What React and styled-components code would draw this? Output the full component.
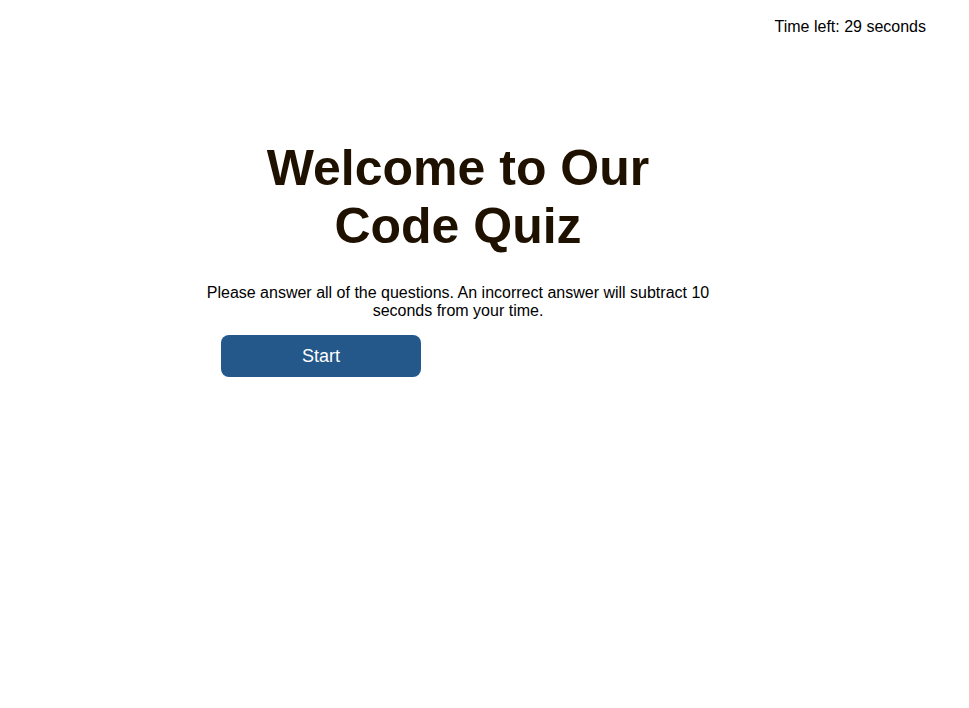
import React from 'react';
import styled, {createGlobalStyle} from 'styled-components';

const Global = createGlobalStyle`
  body {
    margin: 0;
    background: #ffffff;
    font-family: "Liberation Sans", Arial, Helvetica, sans-serif;
    color: #000000;
  }
`;

const Page = styled.div`
  width: 969px;
  min-height: 708px;
`;

const Header = styled.header`
  display: flex;
  justify-content: flex-end;
  padding: 18px 43px 0 0;
  font-size: 16px;
  line-height: 18px;
`;

const Main = styled.main`
  width: 510px;
  margin: 103px 0 0 203px;
  display: flex;
  flex-direction: column;
`;

const Title = styled.h1`
  margin: 0 0 29px;
  text-align: center;
  font-size: 50px;
  line-height: 58px;
  font-weight: 700;
  color: #1f1100;
`;

const Intro = styled.p`
  margin: 0 0 15px;
  text-align: center;
  font-size: 16px;
  line-height: 18px;
`;

const StartButton = styled.button`
  align-self: flex-start;
  margin-left: 18px;
  width: 200px;
  height: 42px;
  border: none;
  border-radius: 8px;
  background: #24578a;
  color: #ffffff;
  font-family: inherit;
  font-size: 18px;
  cursor: pointer;
`;

export default function App() {
  return (
    <Page>
      <Global />
      <Header>Time left: 29 seconds</Header>
      <Main>
        <Title>Welcome to Our<br />Code Quiz</Title>
        <Intro>Please answer all of the questions. An incorrect answer will subtract 10 seconds from your time.</Intro>
        <StartButton>Start</StartButton>
      </Main>
    </Page>
  );
}
